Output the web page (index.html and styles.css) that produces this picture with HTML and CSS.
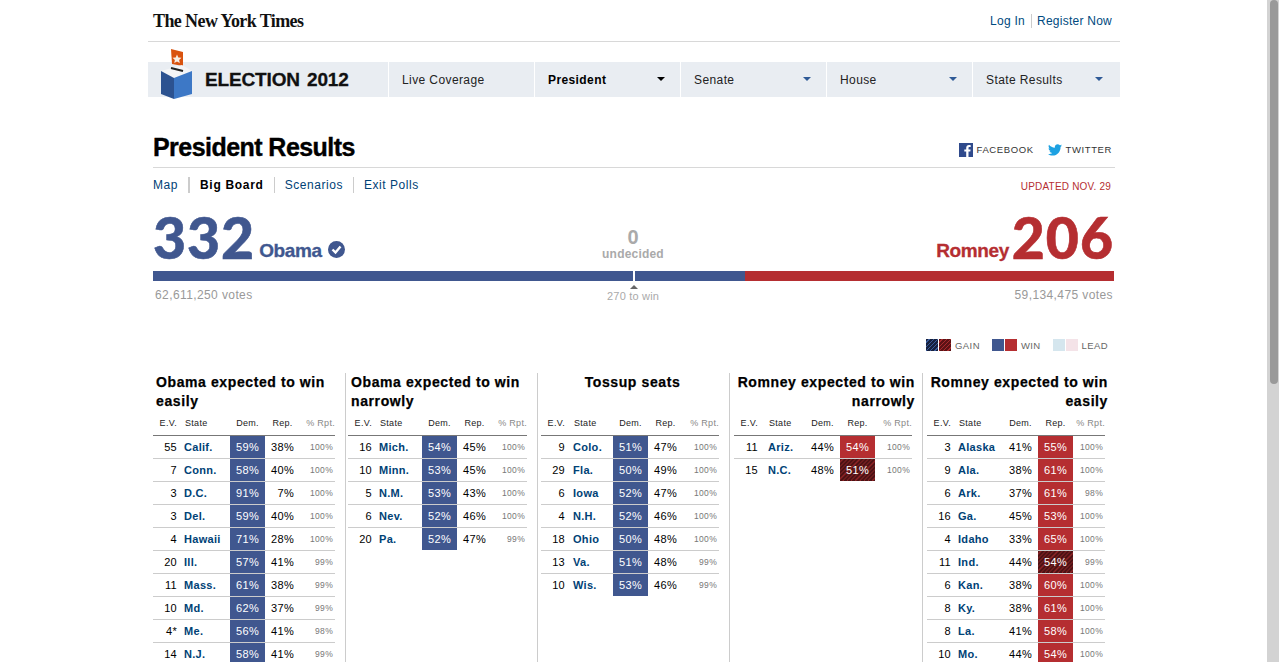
FILE: index.html
```html
<!DOCTYPE html>
<html lang="en">
<head>
<meta charset="utf-8">
<title>President Results - Election 2012</title>
<link rel="stylesheet" href="styles.css">
</head>
<body>
<div class="page">
  <header class="masthead">
    <a class="nyt">The New York Times</a>
    <div class="account"><a>Log In</a><a class="register">Register Now</a></div>
  </header>
  <nav class="mainnav">
    <div class="brand">
      <svg class="ballot" width="31" height="52" viewBox="0 0 31 52" aria-hidden="true">
        <path d="M10 0l12 3v14l-11-2z" fill="#d9530f"/>
        <path d="M16 5.500l1.300 3 3.200.3-2.400 2.100.7 3.100-2.800-1.600-2.800 1.600.7-3.100-2.400-2.100 3.200-.3z" fill="#f7efe6"/>
        <path d="M0 22l21-6 10 6-18 7z" fill="#f4f5f7"/>
        <path d="M10 19l12 3" stroke="#222" stroke-width="2"/>
        <path d="M0 22l13 7v21l-13-5z" fill="#2c5290"/>
        <path d="M13 29l18-7v23l-18 5z" fill="#3d78c6"/>
      </svg>
      <span class="brandname">ELECTION 2012</span>
    </div>
    <a class="tab">Live Coverage</a>
    <a class="tab current">President<i class="caret"></i></a>
    <a class="tab">Senate<i class="caret"></i></a>
    <a class="tab">House<i class="caret"></i></a>
    <a class="tab tab-last">State Results<i class="caret"></i></a>
  </nav>
  <main class="content">
    <div class="titlebar">
      <h1>President Results</h1>
      <div class="share">
        <a class="sharelink"><svg width="14" height="14" viewBox="0 0 14 14" aria-hidden="true"><rect width="14" height="14" fill="#2f4a8c"/><path d="M9.500 14V8.500h1.800l.3-2.100H9.500V5.100c0-.6.2-1 1-1h1.200V2.200c-.2 0-.9-.1-1.700-.1-1.700 0-2.800 1-2.800 2.900v1.400H5.300v2.100h1.900V14z" fill="#fff"/></svg>FACEBOOK</a>
        <a class="sharelink"><svg width="14" height="12" viewBox="0 0 24 20" aria-hidden="true"><path d="M24 2.400c-.9.400-1.800.7-2.800.8 1-.6 1.800-1.600 2.200-2.700-1 .6-2 1-3.100 1.200C19.300.700 18 0 16.600 0c-2.700 0-4.900 2.200-4.900 4.900 0 .4 0 .8.100 1.100C7.700 5.800 4.100 3.900 1.700.900c-.4.700-.7 1.600-.7 2.500 0 1.700.9 3.200 2.200 4.100-.8 0-1.600-.2-2.200-.6v.1c0 2.400 1.700 4.400 3.900 4.800-.7.200-1.500.2-2.200.1.600 2 2.400 3.400 4.600 3.400C5.600 16.400 3 17.300.9 17.300H0c2.200 1.400 4.800 2.200 7.500 2.200 9.100 0 14-7.500 14-14v-.6c1-.7 1.800-1.500 2.500-2.500z" fill="#1da1e2"/></svg>TWITTER</a>
      </div>
    </div>
    <div class="subnav">
      <ul class="sublinks">
        <li><a>Map</a></li>
        <li class="active"><a>Big Board</a></li>
        <li><a>Scenarios</a></li>
        <li><a>Exit Polls</a></li>
      </ul>
      <div class="updated">UPDATED NOV. 29</div>
    </div>
    <section class="tally">
      <div class="scores">
        <div class="score dem"><span class="big">332</span><span class="cand">Obama</span>
          <svg class="check" width="17" height="17" viewBox="0 0 17 17" aria-hidden="true"><circle cx="8.500" cy="8.500" r="8.500" fill="#40578f"/><path d="M4.500 8.500l3 3 5-6" stroke="#fff" stroke-width="2.400" fill="none"/></svg>
        </div>
        <div class="undecided"><b>0</b><span>undecided</span></div>
        <div class="score rep"><span class="cand">Romney</span><span class="big">206</span></div>
      </div>
      <div class="bar"><div class="bar-dem"></div><div class="bar-rep"></div><i class="marker"></i></div>
      <div class="votes">
        <span class="votecount">62,611,250 votes</span>
        <span class="towin">270 to win</span>
        <span class="votecount">59,134,475 votes</span>
      </div>
    </section>
    <div class="legend">
      <i class="sw hatch-d"></i><i class="sw hatch-r"></i><span>GAIN</span>
      <i class="sw win-d"></i><i class="sw win-r"></i><span>WIN</span>
      <i class="sw lead-d"></i><i class="sw lead-r"></i><span>LEAD</span>
    </div>
    <section class="board">
      <div class="col col1">
        <h2>Obama expected to win easily</h2>
        <table>
          <thead><tr><th class="ev">E.V.</th><th class="st">State</th><th class="dm">Dem.</th><th class="rp">Rep.</th><th class="pr">% Rpt.</th></tr></thead>
          <tbody>
            <tr><td class="ev">55</td><td class="st"><a>Calif.</a></td><td class="dm w-d">59%</td><td class="rp">38%</td><td class="pr">100%</td></tr>
            <tr><td class="ev">7</td><td class="st"><a>Conn.</a></td><td class="dm w-d">58%</td><td class="rp">40%</td><td class="pr">100%</td></tr>
            <tr><td class="ev">3</td><td class="st"><a>D.C.</a></td><td class="dm w-d">91%</td><td class="rp">7%</td><td class="pr">100%</td></tr>
            <tr><td class="ev">3</td><td class="st"><a>Del.</a></td><td class="dm w-d">59%</td><td class="rp">40%</td><td class="pr">100%</td></tr>
            <tr><td class="ev">4</td><td class="st"><a>Hawaii</a></td><td class="dm w-d">71%</td><td class="rp">28%</td><td class="pr">100%</td></tr>
            <tr><td class="ev">20</td><td class="st"><a>Ill.</a></td><td class="dm w-d">57%</td><td class="rp">41%</td><td class="pr">99%</td></tr>
            <tr><td class="ev">11</td><td class="st"><a>Mass.</a></td><td class="dm w-d">61%</td><td class="rp">38%</td><td class="pr">99%</td></tr>
            <tr><td class="ev">10</td><td class="st"><a>Md.</a></td><td class="dm w-d">62%</td><td class="rp">37%</td><td class="pr">99%</td></tr>
            <tr><td class="ev">4*</td><td class="st"><a>Me.</a></td><td class="dm w-d">56%</td><td class="rp">41%</td><td class="pr">98%</td></tr>
            <tr><td class="ev">14</td><td class="st"><a>N.J.</a></td><td class="dm w-d">58%</td><td class="rp">41%</td><td class="pr">99%</td></tr>
          </tbody>
        </table>
      </div>
      <div class="col col2">
        <h2>Obama expected to win narrowly</h2>
        <table>
          <thead><tr><th class="ev">E.V.</th><th class="st">State</th><th class="dm">Dem.</th><th class="rp">Rep.</th><th class="pr">% Rpt.</th></tr></thead>
          <tbody>
            <tr><td class="ev">16</td><td class="st"><a>Mich.</a></td><td class="dm w-d">54%</td><td class="rp">45%</td><td class="pr">100%</td></tr>
            <tr><td class="ev">10</td><td class="st"><a>Minn.</a></td><td class="dm w-d">53%</td><td class="rp">45%</td><td class="pr">100%</td></tr>
            <tr><td class="ev">5</td><td class="st"><a>N.M.</a></td><td class="dm w-d">53%</td><td class="rp">43%</td><td class="pr">100%</td></tr>
            <tr><td class="ev">6</td><td class="st"><a>Nev.</a></td><td class="dm w-d">52%</td><td class="rp">46%</td><td class="pr">100%</td></tr>
            <tr><td class="ev">20</td><td class="st"><a>Pa.</a></td><td class="dm w-d">52%</td><td class="rp">47%</td><td class="pr">99%</td></tr>
          </tbody>
        </table>
      </div>
      <div class="col col3">
        <h2 class="center">Tossup seats</h2>
        <table>
          <thead><tr><th class="ev">E.V.</th><th class="st">State</th><th class="dm">Dem.</th><th class="rp">Rep.</th><th class="pr">% Rpt.</th></tr></thead>
          <tbody>
            <tr><td class="ev">9</td><td class="st"><a>Colo.</a></td><td class="dm w-d">51%</td><td class="rp">47%</td><td class="pr">100%</td></tr>
            <tr><td class="ev">29</td><td class="st"><a>Fla.</a></td><td class="dm w-d">50%</td><td class="rp">49%</td><td class="pr">100%</td></tr>
            <tr><td class="ev">6</td><td class="st"><a>Iowa</a></td><td class="dm w-d">52%</td><td class="rp">47%</td><td class="pr">100%</td></tr>
            <tr><td class="ev">4</td><td class="st"><a>N.H.</a></td><td class="dm w-d">52%</td><td class="rp">46%</td><td class="pr">100%</td></tr>
            <tr><td class="ev">18</td><td class="st"><a>Ohio</a></td><td class="dm w-d">50%</td><td class="rp">48%</td><td class="pr">100%</td></tr>
            <tr><td class="ev">13</td><td class="st"><a>Va.</a></td><td class="dm w-d">51%</td><td class="rp">48%</td><td class="pr">99%</td></tr>
            <tr><td class="ev">10</td><td class="st"><a>Wis.</a></td><td class="dm w-d">53%</td><td class="rp">46%</td><td class="pr">99%</td></tr>
          </tbody>
        </table>
      </div>
      <div class="col col4">
        <h2 class="right">Romney expected to win narrowly</h2>
        <table>
          <thead><tr><th class="ev">E.V.</th><th class="st">State</th><th class="dm">Dem.</th><th class="rp">Rep.</th><th class="pr">% Rpt.</th></tr></thead>
          <tbody>
            <tr><td class="ev">11</td><td class="st"><a>Ariz.</a></td><td class="dm">44%</td><td class="rp w-r">54%</td><td class="pr">100%</td></tr>
            <tr><td class="ev">15</td><td class="st"><a>N.C.</a></td><td class="dm">48%</td><td class="rp g-r">51%</td><td class="pr">100%</td></tr>
          </tbody>
        </table>
      </div>
      <div class="col col5">
        <h2 class="right">Romney expected to win easily</h2>
        <table>
          <thead><tr><th class="ev">E.V.</th><th class="st">State</th><th class="dm">Dem.</th><th class="rp">Rep.</th><th class="pr">% Rpt.</th></tr></thead>
          <tbody>
            <tr><td class="ev">3</td><td class="st"><a>Alaska</a></td><td class="dm">41%</td><td class="rp w-r">55%</td><td class="pr">100%</td></tr>
            <tr><td class="ev">9</td><td class="st"><a>Ala.</a></td><td class="dm">38%</td><td class="rp w-r">61%</td><td class="pr">100%</td></tr>
            <tr><td class="ev">6</td><td class="st"><a>Ark.</a></td><td class="dm">37%</td><td class="rp w-r">61%</td><td class="pr">98%</td></tr>
            <tr><td class="ev">16</td><td class="st"><a>Ga.</a></td><td class="dm">45%</td><td class="rp w-r">53%</td><td class="pr">100%</td></tr>
            <tr><td class="ev">4</td><td class="st"><a>Idaho</a></td><td class="dm">33%</td><td class="rp w-r">65%</td><td class="pr">100%</td></tr>
            <tr><td class="ev">11</td><td class="st"><a>Ind.</a></td><td class="dm">44%</td><td class="rp g-r">54%</td><td class="pr">99%</td></tr>
            <tr><td class="ev">6</td><td class="st"><a>Kan.</a></td><td class="dm">38%</td><td class="rp w-r">60%</td><td class="pr">100%</td></tr>
            <tr><td class="ev">8</td><td class="st"><a>Ky.</a></td><td class="dm">38%</td><td class="rp w-r">61%</td><td class="pr">100%</td></tr>
            <tr><td class="ev">8</td><td class="st"><a>La.</a></td><td class="dm">41%</td><td class="rp w-r">58%</td><td class="pr">100%</td></tr>
            <tr><td class="ev">10</td><td class="st"><a>Mo.</a></td><td class="dm">44%</td><td class="rp w-r">54%</td><td class="pr">100%</td></tr>
          </tbody>
        </table>
      </div>
    </section>
  </main>
</div>
<div class="scrollbar"><div class="thumb"></div></div>
</body>
</html>
```
FILE: styles.css
```css
* { box-sizing: border-box; }
html, body { margin: 0; height: 662px; overflow: hidden; background: #fff; }
body { font-family: "Liberation Sans", Arial, sans-serif; color: #000; }
a { color: #004276; text-decoration: none; }

.page { width: 972px; margin-left: 148px; }

.masthead { height: 42px; border-bottom: 1px solid #d8d8d8; display: flex; justify-content: space-between; align-items: flex-start; padding: 0 8px 0 5px; }
.nyt { font-family: "Liberation Serif", serif; font-weight: bold; font-size: 18px; letter-spacing: -.6px; color: #111; line-height: 42px; }
.account { display: flex; font-size: 12px; line-height: 14px; padding-top: 14px; letter-spacing: .25px; }
.account a { color: #004a80; }
.register { margin-left: 6px; padding-left: 5px; border-left: 1px solid #ccc; }

.mainnav { margin-top: 20px; height: 35px; display: flex; font-size: 12px; letter-spacing: .4px; }
.brand { width: 240px; background: #e9edf2; display: flex; align-items: center; position: relative; padding-left: 57px; }
.ballot { position: absolute; left: 13px; top: -13px; }
.brandname { font-size: 19px; font-weight: bold; letter-spacing: -.15px; word-spacing: 2px; color: #111; -webkit-text-stroke: .3px #111; }
.tab { width: 145px; margin-left: 1px; padding-left: 13px; background: #e9edf2; color: #222; line-height: 37px; position: relative; }
.tab-last { flex: 1; }
.current { font-weight: bold; color: #000; letter-spacing: .4px; }
.caret { position: absolute; right: 15px; top: 15px; width: 0; height: 0; border-style: solid; border-width: 4px 4px 0; border-color: #2f5a96 transparent transparent; }
.tab-last .caret { right: 17px; }
.current .caret { border-top-color: #000; }

.content { padding-left: 5px; width: 967px; }
.titlebar { margin-top: 33px; height: 38px; border-bottom: 1px solid #d8d8d8; display: flex; justify-content: space-between; align-items: center; }
h1 { margin: 0; font-size: 25px; font-weight: bold; letter-spacing: -.55px; line-height: 34px; padding-bottom: 4px; -webkit-text-stroke: .4px #000; }
.share { display: flex; gap: 14px; font-size: 9.500px; letter-spacing: .6px; padding-right: 3px; padding-top: 2px; }
.sharelink { color: #333; display: flex; align-items: center; gap: 4px; }

.subnav { display: flex; justify-content: space-between; align-items: flex-start; height: 50px; padding-top: 9px; }
.sublinks { list-style: none; margin: 0; padding: 0; display: flex; font-size: 12px; line-height: 16px; letter-spacing: .55px; }
.sublinks li { padding: 0 10px; border-left: 1px solid #ccc; }
.sublinks li:first-child { padding-left: 0; border-left: 0; }
.sublinks .active { border-left: 2px solid #ccc; }
.sublinks .active a { color: #000; font-weight: bold; letter-spacing: .7px; }
.updated { font-size: 10px; color: #b52e31; padding: 3px 4px 0 0; line-height: 14px; letter-spacing: .2px; }

.tally { width: 961px; }
.scores { display: flex; justify-content: space-between; align-items: flex-end; height: 49px; position: relative; }
.score { display: flex; align-items: flex-end; }
.big { font-family: Lato, sans-serif; font-weight: 900; font-size: 57px; line-height: 40px; padding-bottom: 10px; letter-spacing: 1px; -webkit-text-stroke: .6px currentColor; }
.cand { font-size: 19px; font-weight: bold; line-height: 22px; padding-bottom: 5px; letter-spacing: -.4px; -webkit-text-stroke: .3px currentColor; }
.dem { color: #40578f; }
.dem .cand { margin-left: 4px; }
.check { margin: 0 0 9px 6px; }
.rep { color: #b52e31; }
.rep .cand { margin-right: 3px; }
.undecided { position: absolute; left: 450px; bottom: 6px; display: flex; flex-direction: column; align-items: center; color: #aaa; font-weight: bold; width: 60px; }
.undecided b { font-size: 20px; line-height: 20px; }
.undecided span { font-size: 12px; line-height: 14px; letter-spacing: .2px; }

.bar { height: 10px; margin-top: 4px; display: flex; position: relative; }
.bar-dem { width: 592px; background: #40578f; }
.bar-rep { flex: 1; background: #b52e31; }
.marker { position: absolute; left: 480px; top: 0; width: 2px; height: 10px; background: #fff; }
.marker::after { content: ""; position: absolute; left: -3px; top: 14px; border-style: solid; border-width: 0 4px 4px; border-color: transparent transparent #666; }
.votes { display: flex; justify-content: space-between; font-size: 12px; color: #999; padding: 7px 1px 0 2px; letter-spacing: .4px; line-height: 14px; height: 58px; position: relative; }
.towin { position: absolute; left: 454px; top: 8px; font-size: 11px; color: #aaa; letter-spacing: .2px; }

.legend { width: 955px; height: 34px; display: flex; justify-content: flex-end; align-items: flex-start; font-size: 9.500px; letter-spacing: .4px; color: #666; line-height: 14px; }
.legend span { margin: 0 12px 0 3px; }
.legend span:last-child { margin-right: 0; }
.sw { width: 12px; height: 12px; margin-right: 1px; display: block; }
.win-d { background: #40578f; }
.win-r { background: #b52e31; }
.lead-d { background: #d5e6ee; }
.lead-r { background: #f4e3e8; }
.hatch-d { background: repeating-linear-gradient(135deg, #16213f 0 2px, #3a5a9a 2px 3px); }
.hatch-r { background: repeating-linear-gradient(135deg, #5c1215 0 2px, #a82a2d 2px 3px); }

.board { display: flex; }
.col { border-right: 1px solid #ccc; height: 300px; flex: none; }
.col1 { width: 193px; }
.col2 { width: 192px; padding-left: 2px; }
.col3 { width: 192px; padding-left: 3px; }
.col4 { width: 193px; padding-left: 4px; }
.col5 { width: 186px; padding-left: 4px; border-right: 0; }
h2 { margin: 0 0 3px; font-size: 14px; line-height: 19px; height: 38px; letter-spacing: .6px; font-weight: bold; padding: 0 3px; color: #000; -webkit-text-stroke: .25px #000; }
.center { text-align: center; padding-right: 8px; }
.right { text-align: right; padding: 0 7px 0 0; }
.col5 .right { padding: 0; width: 181px; }

table { border-collapse: collapse; table-layout: fixed; font-size: 11px; letter-spacing: .3px; }
th { height: 21px; font-size: 9px; font-weight: normal; border-bottom: 1px solid #777; letter-spacing: .3px; padding: 0 0 3px; color: #222; }
td { height: 23px; padding: 0; border-bottom: 1px solid #ccc; }
tbody tr:last-child td { border-bottom: 0; }
.ev { width: 25px; text-align: right; padding-right: 1px; }
.st { text-align: left; padding-left: 6px; }
th.st { padding-left: 7px; }
td.st a { font-weight: bold; }
.dm, .rp { width: 35px; text-align: right; padding-right: 6px; }
th.dm, th.rp { text-align: center; padding-right: 0; }
.pr { text-align: right; padding-right: 2px; font-size: 8.500px; color: #777; }
th.pr { color: #888; font-size: 9px; padding-right: 0; }
.w-d { background: #40578f; color: #fff; }
.w-r { background: #b52e31; color: #fff; }
.g-r { color: #fff; background: repeating-linear-gradient(135deg, #4d1214 0 2px, #8f2326 2px 3px); }
.col1 table { width: 182px; } .col1 .st { width: 52px; } .col1 .pr { width: 35px; }
.col2 table { width: 179px; } .col2 .st { width: 49px; } .col2 .pr { width: 35px; }
.col3 table { width: 178px; } .col3 .st { width: 47px; padding-left: 7px; } .col3 th.st { padding-left: 8px; } .col3 .pr { width: 36px; }
.col4 table { width: 178px; } .col4 .st { width: 46px; padding-left: 9px; } .col4 th.st { padding-left: 10px; } .col4 .pr { width: 37px; }
.col5 table { width: 178px; } .col5 .st { width: 51px; } .col5 .pr { width: 32px; }

.scrollbar { position: fixed; top: 0; right: 0; width: 12px; height: 662px; background: #d3d3d3; }
.thumb { width: 8px; height: 384px; margin-left: 3px; background: #999; border-radius: 4px; }
```
